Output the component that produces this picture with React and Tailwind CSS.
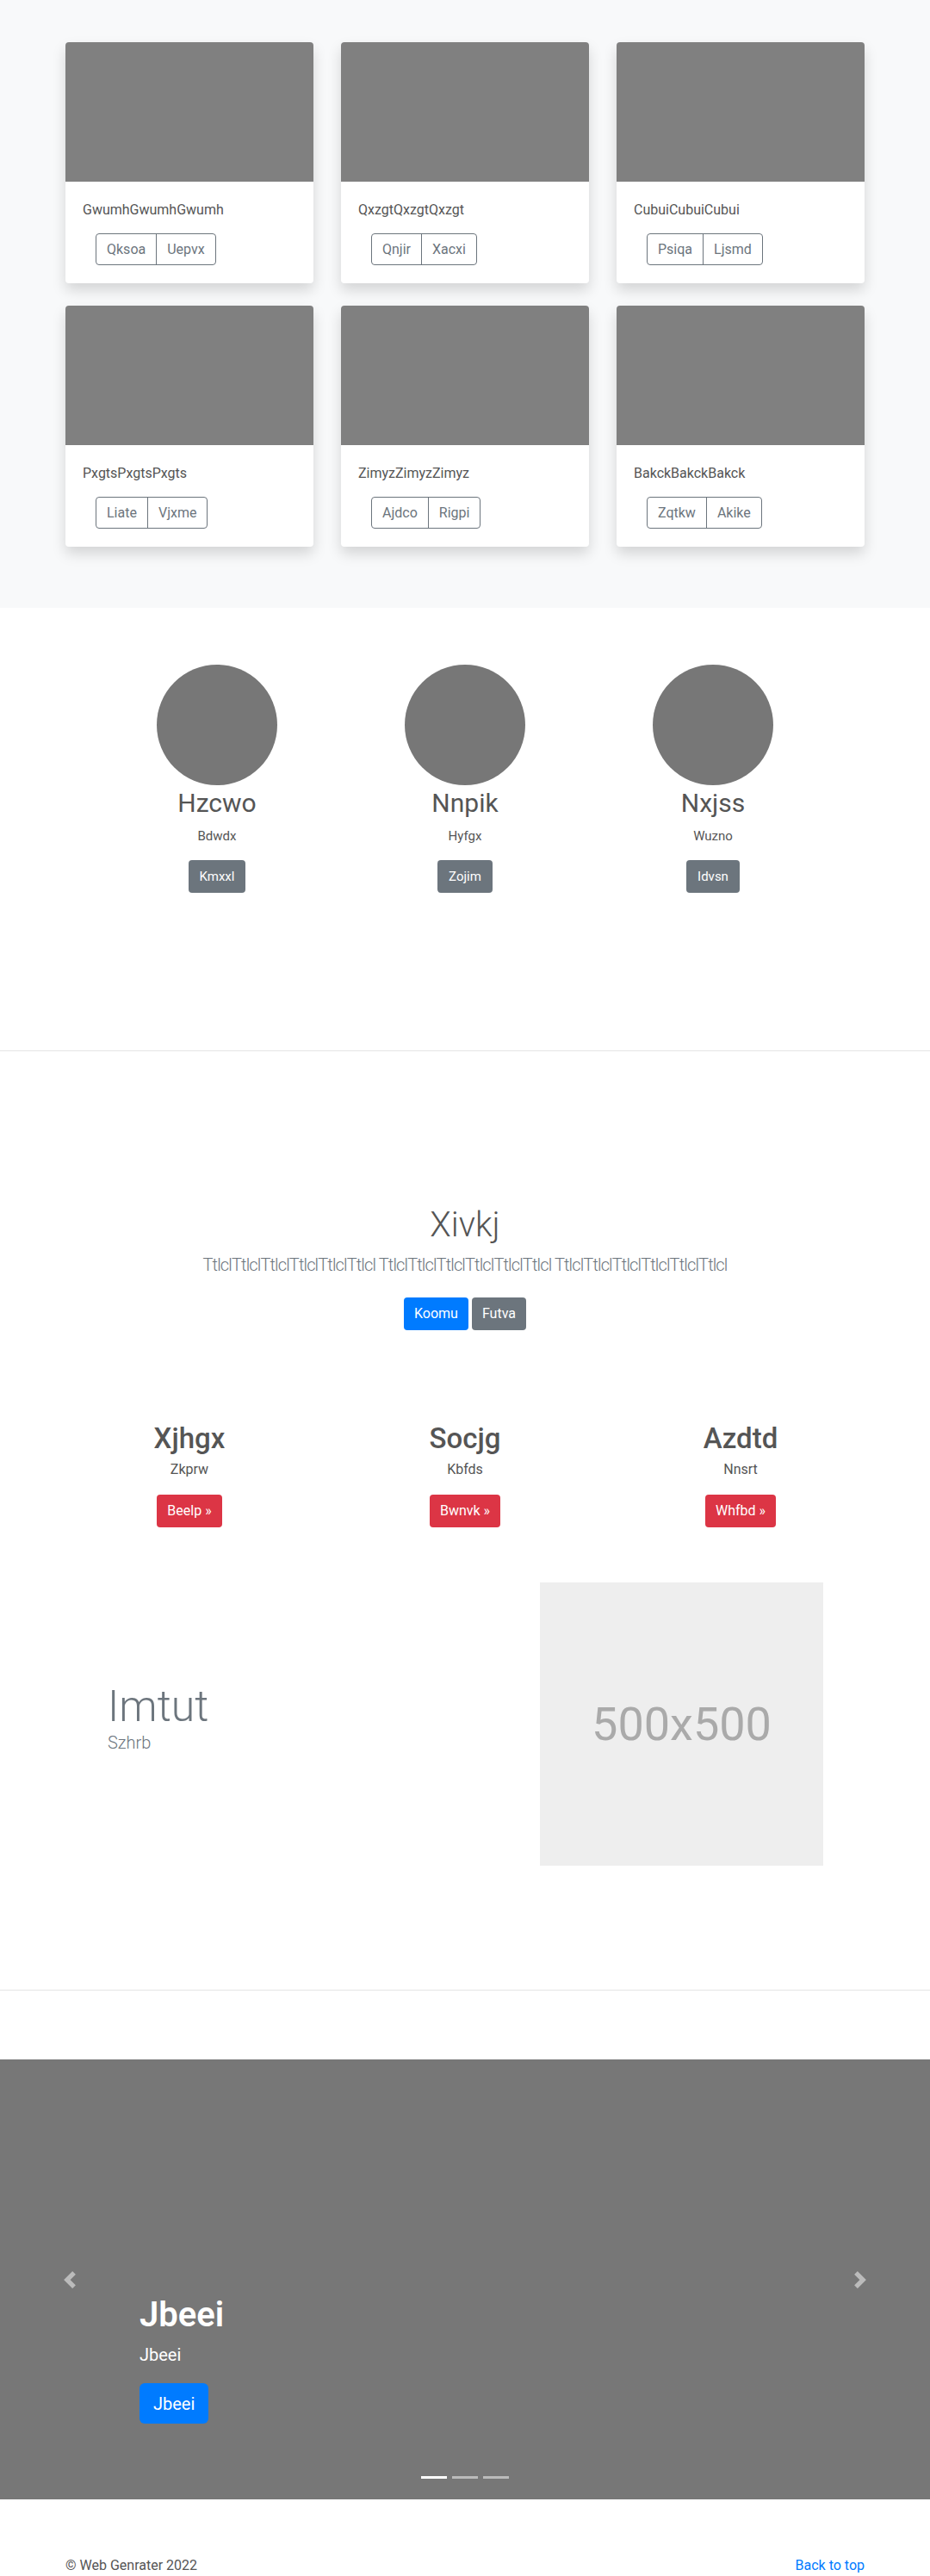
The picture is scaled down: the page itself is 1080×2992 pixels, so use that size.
import React from 'react';

const cards = [
  { title: 'GwumhGwumhGwumh', a: 'Qksoa', b: 'Uepvx' },
  { title: 'QxzgtQxzgtQxzgt', a: 'Qnjir', b: 'Xacxi' },
  { title: 'CubuiCubuiCubui', a: 'Psiqa', b: 'Ljsmd' },
  { title: 'PxgtsPxgtsPxgts', a: 'Liate', b: 'Vjxme' },
  { title: 'ZimyzZimyzZimyz', a: 'Ajdco', b: 'Rigpi' },
  { title: 'BakckBakckBakck', a: 'Zqtkw', b: 'Akike' },
];

const people = [
  { name: 'Hzcwo', sub: 'Bdwdx', btn: 'Kmxxl' },
  { name: 'Nnpik', sub: 'Hyfgx', btn: 'Zojim' },
  { name: 'Nxjss', sub: 'Wuzno', btn: 'Idvsn' },
];

const features = [
  { title: 'Xjhgx', sub: 'Zkprw', btn: 'Beelp' },
  { title: 'Socjg', sub: 'Kbfds', btn: 'Bwnvk' },
  { title: 'Azdtd', sub: 'Nnsrt', btn: 'Whfbd' },
];

const Chevron = ({ flip }) => (
  <svg width="20" height="20" viewBox="0 0 8 8" className="opacity-50">
    <path
      fill="#fff"
      d={flip ? 'M2.75 0l-1.5 1.5L3.75 4l-2.5 2.5L2.75 8l4-4-4-4z' : 'M5.25 0l-4 4 4 4 1.5-1.5L4.25 4l2.5-2.5L5.25 0z'}
    />
  </svg>
);

const App = () => {
  return (
    <div className="font-['Roboto','Liberation_Sans',sans-serif] text-[#212529] bg-white">
      {/* album cards */}
      <section className="bg-[#f8f9fa] pt-[49px] pb-[71px]">
        <div className="w-[928px] mx-auto grid grid-cols-3 gap-x-8 gap-y-[26px]">
          {cards.map((c, i) => (
            <div key={i} className="bg-white rounded shadow-[0_8px_16px_rgba(0,0,0,0.15)] overflow-hidden">
              <div className="h-[162px] bg-[#808080]" />
              <div className="px-5 pt-[21px] pb-[21px]">
                <p className="text-base leading-6 text-[#555]">{c.title}</p>
                <div className="ml-[15px] mt-[15px] inline-flex h-[37px] border border-[#6c757d] rounded text-[#6c757d] text-base">
                  <span className="px-[12px] flex items-center">{c.a}</span>
                  <span className="px-[12px] flex items-center border-l border-[#6c757d]">{c.b}</span>
                </div>
              </div>
            </div>
          ))}
        </div>
      </section>

      {/* people */}
      <section className="pt-[66px] h-[514px]">
        <div className="w-[864px] mx-auto flex">
          {people.map((p, i) => (
            <div key={i} className="w-[288px] flex flex-col items-center">
              <div className="w-[140px] h-[140px] rounded-full bg-[#777]" />
              <h2 className="mt-[3px] text-[30px] leading-[36px] text-[#555]">{p.name}</h2>
              <p className="mt-[8px] text-[15px] leading-6 text-[#555]">{p.sub}</p>
              <button className="mt-[16px] h-[38px] px-[13px] rounded bg-[#6c757d] text-white text-[15px]">{p.btn}</button>
            </div>
          ))}
        </div>
      </section>

      <hr className="border-0 border-t border-[#e5e5e5]" />

      {/* hero */}
      <section className="pt-[178px] text-center">
        <h1 className="text-[40px] leading-[48px] font-light text-[#555]">Xivkj</h1>
        <p className="mt-[7px] text-[20px] leading-[30px] font-light tracking-[-0.85px] text-[#6c757d]">
          TtlclTtlclTtlclTtlclTtlclTtlcl TtlclTtlclTtlclTtlclTtlclTtlcl TtlclTtlclTtlclTtlclTtlclTtlcl
        </p>
        <div className="mt-[23px] flex justify-center gap-1">
          <button className="h-[38px] px-3 rounded bg-[#007bff] text-white text-base">Koomu</button>
          <button className="h-[38px] px-3 rounded bg-[#6c757d] text-white text-base">Futva</button>
        </div>
      </section>

      {/* features */}
      <section className="pt-[107px]">
        <div className="w-[960px] mx-auto grid grid-cols-3 text-center">
          {features.map((f, i) => (
            <div key={i} className="flex flex-col items-center">
              <h2 className="text-[33px] leading-[38px] font-medium text-[#555]">{f.title}</h2>
              <p className="mt-[5px] text-base leading-6 text-[#555]">{f.sub}</p>
              <button className="mt-[17px] h-[38px] px-3 rounded bg-[#dc3545] text-white text-base">{f.btn} &raquo;</button>
            </div>
          ))}
        </div>
      </section>

      {/* featurette */}
      <section className="pt-[64px] pb-[144px]">
        <div className="w-[960px] mx-auto flex items-center">
          <div className="w-[480px] pl-[65px] mb-[16px]">
            <h2 className="text-[50px] leading-[58px] font-light text-[#6c757d]">Imtut</h2>
            <p className="text-[20px] leading-[26px] font-light text-[#6c757d]">Szhrb</p>
          </div>
          <div className="ml-[87px] w-[329px] h-[329px] bg-[#eeeeee] flex items-center justify-center">
            <span className="text-[54px] text-[#aaaaaa]">500x500</span>
          </div>
        </div>
      </section>

      <hr className="border-0 border-t border-[#e5e5e5]" />

      {/* carousel */}
      <section className="mt-[80px] relative h-[511px] bg-[#777]">
        <div className="absolute left-0 top-0 h-full w-[15%] flex items-center justify-center">
          <Chevron />
        </div>
        <div className="absolute right-0 top-0 h-full w-[15%] flex items-center justify-center">
          <Chevron flip />
        </div>
        <div className="absolute left-[15%] right-[15%] bottom-[88px] text-white">
          <h1 className="text-[40px] leading-[48px] font-semibold">Jbeei</h1>
          <p className="mt-[7px] text-[20px] leading-[30px]">Jbeei</p>
          <button className="mt-[18px] h-[47px] px-4 rounded-md bg-[#007bff] text-white text-[20px]">Jbeei</button>
        </div>
        <div className="absolute bottom-[24px] left-0 right-0 flex justify-center gap-[6px]">
          <span className="w-[30px] h-[3px] bg-white" />
          <span className="w-[30px] h-[3px] bg-white/50" />
          <span className="w-[30px] h-[3px] bg-white/50" />
        </div>
      </section>

      {/* footer */}
      <footer className="pt-[65px] pb-12">
        <div className="w-[928px] mx-auto flex justify-between text-base leading-6">
          <p className="text-[#555]">&copy; Web Genrater 2022</p>
          <a href="#" className="text-[#007bff]">Back to top</a>
        </div>
      </footer>
    </div>
  );
};

export default App;
